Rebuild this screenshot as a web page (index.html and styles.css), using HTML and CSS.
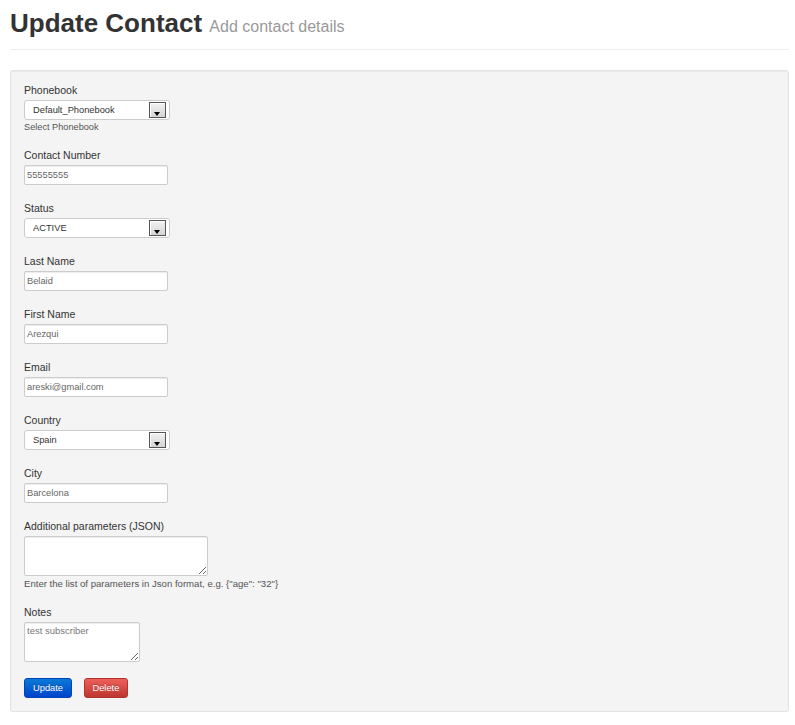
FILE: index.html
```html
<!DOCTYPE html>
<html>
<head>
<meta charset="utf-8">
<title>Update Contact</title>
<link rel="stylesheet" href="styles.css">
</head>
<body>
<div class="page">
  <div class="page-header">
    <h1>Update Contact <small>Add contact details</small></h1>
  </div>
  <form class="well">
    <div class="group">
      <label>Phonebook</label>
      <div class="select-wrap">
        <select><option>Default_Phonebook</option></select>
        <span class="arrow"></span>
      </div>
      <p class="help help-tight">Select Phonebook</p>
    </div>
    <div class="group">
      <label>Contact Number</label>
      <input type="text" value="55555555">
    </div>
    <div class="group">
      <label>Status</label>
      <div class="select-wrap">
        <select><option>ACTIVE</option></select>
        <span class="arrow"></span>
      </div>
    </div>
    <div class="group">
      <label>Last Name</label>
      <input type="text" value="Belaid">
    </div>
    <div class="group">
      <label>First Name</label>
      <input type="text" value="Arezqui">
    </div>
    <div class="group">
      <label>Email</label>
      <input type="text" value="areski@gmail.com">
    </div>
    <div class="group">
      <label>Country</label>
      <div class="select-wrap">
        <select><option>Spain</option></select>
        <span class="arrow"></span>
      </div>
    </div>
    <div class="group">
      <label>City</label>
      <input type="text" value="Barcelona">
    </div>
    <div class="group">
      <label>Additional parameters (JSON)</label>
      <textarea class="ta-wide"></textarea>
      <p class="help">Enter the list of parameters in Json format, e.g. {"age": "32"}</p>
    </div>
    <div class="group">
      <label>Notes</label>
      <textarea class="ta-narrow">test subscriber</textarea>
    </div>
    <div class="actions">
      <button type="button" class="btn btn-primary">Update</button>
      <button type="button" class="btn btn-danger">Delete</button>
    </div>
  </form>
</div>
</body>
</html>
```

FILE: styles.css
```css
* { box-sizing: border-box; }
html, body { margin: 0; padding: 0; background: #fff; }
body {
  font-family: "Liberation Sans", Arial, sans-serif;
  color: #333;
}
.page { padding: 0 6px 0 10px; }

.page-header {
  padding: 5px 0 8px;
  border-bottom: 1px solid #eeeeee;
}
.page-header h1 {
  margin: 0;
  height: 36px;
  font-size: 26px;
  line-height: 36px;
  font-weight: bold;
  color: #333;
}
.page-header small {
  font-size: 16px;
  line-height: 1;
  font-weight: normal;
  color: #999;
}

.well {
  margin: 20px 0 0;
  padding: 12px 13px 13px;
  background: #f4f4f4;
  border: 1px solid #e3e3e3;
  border-radius: 3px;
  box-shadow: inset 0 1px 1px rgba(0,0,0,0.05);
}

.group { margin-bottom: 16px; }
.group label {
  display: block;
  font-size: 10.5px;
  line-height: 14px;
  margin-bottom: 3px;
  color: #333;
}

.select-wrap {
  position: relative;
  width: 146px;
  height: 20px;
}
.select-wrap select {
  display: block;
  width: 146px;
  height: 20px;
  margin: 0;
  padding: 0 0 0 8px;
  border: 1px solid #cccccc;
  border-radius: 3px;
  background: #fff;
  font-family: "Liberation Sans", Arial, sans-serif;
  font-size: 9.3px;
  color: #333;
  -webkit-appearance: none;
  appearance: none;
  outline: none;
}
.select-wrap .arrow {
  position: absolute;
  right: 4px;
  top: 2px;
  width: 17px;
  height: 16px;
  border: 1px solid #555;
  background: linear-gradient(#f2f2f2, #d4d4d4);
  box-shadow: inset 1px 1px 0 #fff;
  pointer-events: none;
}
.select-wrap .arrow::after {
  content: "";
  position: absolute;
  left: 4px;
  top: 9px;
  width: 0;
  height: 0;
  border-left: 3.5px solid transparent;
  border-right: 3.5px solid transparent;
  border-top: 4px solid #000;
}

.group input {
  display: block;
  width: 144px;
  height: 20px;
  margin: 0;
  padding: 0 2px;
  border: 1px solid #cccccc;
  border-radius: 2px;
  background: #fff;
  box-shadow: inset 0 1px 1px rgba(0,0,0,0.075);
  font-family: "Liberation Sans", Arial, sans-serif;
  font-size: 9.3px;
  color: #666;
  outline: none;
}

.group textarea {
  display: block;
  height: 40px;
  margin: 0;
  padding: 2px 2px;
  border: 1px solid #cccccc;
  border-radius: 2px;
  background: #fff;
  box-shadow: inset 0 1px 1px rgba(0,0,0,0.075);
  font-family: "Liberation Sans", Arial, sans-serif;
  font-size: 9.5px;
  line-height: 12px;
  color: #777;
  outline: none;
}
.ta-wide { width: 184px; }
.ta-narrow { width: 116px; }

.help {
  margin: 3px 0 0;
  font-size: 9.6px;
  line-height: 10px;
  color: #555;
}
.help-tight { margin-top: 2px; font-size: 9.2px; }

.actions {
  display: flex;
  gap: 12px;
  margin-top: 3px;
}
.btn {
  height: 20px;
  margin: 0;
  padding: 0 8px;
  border-radius: 3px;
  font-family: "Liberation Sans", Arial, sans-serif;
  font-size: 9.3px;
  line-height: 18px;
  color: #fff;
  text-shadow: 0 -1px 0 rgba(0,0,0,0.25);
  cursor: pointer;
}
.btn-primary {
  background: linear-gradient(#0a7ad6, #0044cc);
  border: 1px solid #0044bb;
}
.btn-danger {
  padding: 0 7.5px;
  background: linear-gradient(#ee5f5b, #bd362f);
  border: 1px solid #b3322c;
}
```
